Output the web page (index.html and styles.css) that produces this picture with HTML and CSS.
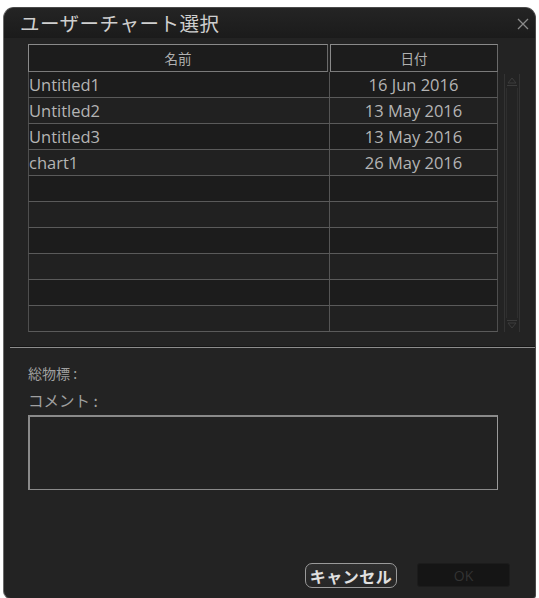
FILE: index.html
```html
<!DOCTYPE html>
<html lang="ja">
<head>
<meta charset="utf-8">
<title>ユーザーチャート選択</title>
<link rel="stylesheet" href="styles.css">
</head>
<body>
<div class="dialog">
  <div class="titlebar">
    <span class="title">ユーザーチャート選択</span>
    <span class="close">
      <svg width="12" height="12" viewBox="0 0 12 12"><path d="M1 1 L11 11 M11 1 L1 11" stroke="#8a8a8a" stroke-width="1.3" fill="none"/></svg>
    </span>
  </div>
  <div class="listarea">
    <div class="table">
      <div class="thead">
        <div class="th th-name">名前</div>
        <div class="th th-date">日付</div>
      </div>
      <div class="row odd"><div class="td td-name">Untitled1</div><div class="td td-date">16 Jun 2016</div></div>
      <div class="row even"><div class="td td-name">Untitled2</div><div class="td td-date">13 May 2016</div></div>
      <div class="row odd"><div class="td td-name">Untitled3</div><div class="td td-date">13 May 2016</div></div>
      <div class="row even"><div class="td td-name">chart1</div><div class="td td-date">26 May 2016</div></div>
      <div class="row odd"><div class="td td-name"></div><div class="td td-date"></div></div>
      <div class="row even"><div class="td td-name"></div><div class="td td-date"></div></div>
      <div class="row odd"><div class="td td-name"></div><div class="td td-date"></div></div>
      <div class="row even"><div class="td td-name"></div><div class="td td-date"></div></div>
      <div class="row odd"><div class="td td-name"></div><div class="td td-date"></div></div>
      <div class="row even"><div class="td td-name"></div><div class="td td-date"></div></div>
    </div>
    <div class="scrollbar">
      <div class="sb-btn">
        <svg width="14" height="14" viewBox="0 0 14 14"><path d="M3 9 L7 4 L11 9 Z" fill="none" stroke="#3c3c3c" stroke-width="1"/><path d="M2 11.5 H12" stroke="#3c3c3c" stroke-width="1"/></svg>
      </div>
      <div class="sb-track"></div>
      <div class="sb-btn">
        <svg width="14" height="14" viewBox="0 0 14 14"><path d="M3 5 L7 10 L11 5 Z" fill="none" stroke="#3c3c3c" stroke-width="1"/><path d="M2 2.5 H12" stroke="#3c3c3c" stroke-width="1"/></svg>
      </div>
    </div>
  </div>
  <div class="separator"></div>
  <div class="info">
    <div class="label label-total">総物標 :</div>
    <div class="label label-comment">コメント :</div>
    <div class="comment-box"></div>
  </div>
  <div class="footer">
    <button class="btn btn-cancel">キャンセル</button>
    <button class="btn btn-ok">OK</button>
  </div>
</div>
</body>
</html>
```
FILE: styles.css
```css
html, body {
  margin: 0;
  padding: 0;
  background: #ffffff;
}
body {
  width: 539px;
  height: 598px;
  overflow: hidden;
  font-family: "Open Sans", "Noto Sans CJK JP", sans-serif;
}
.dialog {
  margin: 7px 0 0 3px;
  width: 531px;
  height: 590px;
  background: #232323;
  border: 1px solid #4a4a4a;
  border-left-color: #6a6a6a;
  border-radius: 11px 11px 4px 8px;
  display: flex;
  flex-direction: column;
  overflow: hidden;
}
.titlebar {
  height: 30px;
  flex: none;
  display: flex;
  align-items: center;
  justify-content: space-between;
  padding: 0 6px 0 16px;
  background: linear-gradient(#242424, #1b1b1b);
}
.title {
  font-family: "Noto Sans CJK JP", sans-serif;
  font-size: 19.5px;
  font-weight: 400;
  color: #cfcfcf;
  letter-spacing: 0.5px;
  line-height: 30px;
}
.close {
  display: flex;
  align-items: center;
  padding-top: 1px;
}
.listarea {
  display: flex;
  gap: 6px;
  padding: 6px 0 0 24px;
}
.table {
  width: 470px;
  display: flex;
  flex-direction: column;
}
.thead {
  display: flex;
  gap: 2px;
  height: 28px;
}
.th {
  box-sizing: border-box;
  height: 28px;
  border: 1px solid #8a8a8a;
  border-right-color: #6a6a6a;
  border-bottom-color: #7a7a7a;
  background: #1c1c1c;
  font-family: "Noto Sans CJK JP", sans-serif;
  font-size: 13.5px;
  color: #b0b0b0;
  display: flex;
  align-items: center;
  justify-content: center;
}
.th-name { width: 300px; }
.th-date { width: 168px; }
.row {
  display: flex;
  height: 26px;
  box-sizing: border-box;
  border-bottom: 1px solid #5a5a5a;
  border-left: 1px solid #4e4e4e;
  border-right: 1px solid #4e4e4e;
}
.row.odd { background: #1c1c1c; }
.row.even { background: #212121; }
.td {
  font-size: 16.5px;
  font-weight: 400;
  color: #b4b4b4;
  line-height: 25px;
  white-space: nowrap;
}
.td-name {
  width: 300px;
  border-right: 1px solid #555555;
}
.td-date {
  flex: 1;
  text-align: center;
}
.scrollbar {
  width: 16px;
  margin-top: 30px;
  height: 258px;
  box-sizing: border-box;
  border-left: 1px solid #333;
  border-right: 1px solid #333;
  display: flex;
  flex-direction: column;
  align-items: center;
}
.sb-btn {
  height: 14px;
  display: flex;
  align-items: center;
  justify-content: center;
}
.sb-track {
  flex: 1;
  width: 10px;
  border-left: 1px solid #2e2e2e;
  border-right: 1px solid #2e2e2e;
}
.separator {
  margin: 15px 0 0 6px;
  height: 1px;
  background: #8c8c8c;
  box-shadow: 0 -1px 0 #151515;
}
.info {
  padding: 15px 0 0 24px;
  display: flex;
  flex-direction: column;
}
.label {
  font-family: "Noto Sans CJK JP", sans-serif;
  color: #a0a0a0;
  height: 20px;
  line-height: 20px;
}
.label-total {
  font-size: 14px;
}
.label-comment {
  margin-top: 7px;
  font-size: 15.5px;
}
.comment-box {
  margin-top: 5px;
  width: 470px;
  height: 75px;
  box-sizing: border-box;
  border: 1px solid #8a8a8a;
  border-left-width: 2px;
  border-top-width: 2px;
  border-right-color: #9a9a9a;
  background: #222222;
}
.footer {
  margin-top: 73px;
  display: flex;
  justify-content: flex-end;
  gap: 20px;
  padding-right: 25px;
}
.btn {
  margin: 0;
  padding: 0;
  font-family: "Noto Sans CJK JP", sans-serif;
  font-size: 16px;
  font-weight: bold;
  display: flex;
  align-items: center;
  justify-content: center;
}
.btn-cancel {
  width: 92px;
  height: 25px;
  border: 1.5px solid #9a9a9a;
  border-radius: 7px;
  background: linear-gradient(#2e2e2e, #262626);
  color: #e0e0e0;
  letter-spacing: 0.5px;
}
.btn-ok {
  width: 93px;
  height: 24px;
  border: 1px solid #1c1c1c;
  border-radius: 3px;
  background: #151515;
  color: #333333;
  font-weight: normal;
  font-family: "Open Sans", sans-serif;
  font-size: 14px;
}
```
